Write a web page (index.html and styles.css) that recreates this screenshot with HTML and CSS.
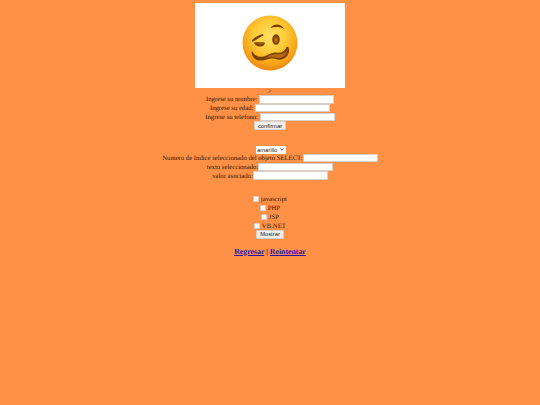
FILE: index.html
```html
<!DOCTYPE html>
<html lang="es">
<head>
<meta charset="utf-8">
<title>Formulario</title>
<link rel="stylesheet" href="styles.css">
</head>
<body>
<main class="page">
  <div class="picture">
    <svg class="emoji" viewBox="0 0 112 112" role="img" aria-label="woozy face">
      <defs>
        <radialGradient id="skin" cx="50%" cy="38%" r="60%">
          <stop offset="0" stop-color="#ffe066"/>
          <stop offset="0.5" stop-color="#fdc935"/>
          <stop offset="0.82" stop-color="#f9a51a"/>
          <stop offset="1" stop-color="#ef8c12"/>
        </radialGradient>
        <filter id="soft"><feGaussianBlur stdDeviation="0.6"/></filter>
      </defs>
      <circle cx="56" cy="56" r="55" fill="url(#skin)" filter="url(#soft)"/>
      <g filter="url(#soft)" fill="#7a4006">
        <path d="M57 26 C61 18 76 15 85 28 C76 23 66 23 57 26Z"/>
        <path d="M20 50 C26 44 34 40 42 38 L43 41 C36 44 30 49 22 53 C20 53 19 52 20 50Z"/>
        <path d="M24 55 C31 54 39 54 46 55 C46 60 41 64 34 63 C29 62 25 59 24 55Z"/>
        <ellipse cx="68" cy="49" rx="7.5" ry="10.5"/>
        <path d="M22 74 C25 82 33 85 43 83 C52 81 59 74 68 75 C76 76 84 76 89 64 C92 62 95 67 94 74 C91 85 81 91 71 89 C64 87 58 86 50 89 C41 92 31 92 26 88 C21 84 19 78 19 75 C19 73 21 72 22 74Z"/>
      </g>
      <g filter="url(#soft)" fill="#b9690c">
        <path d="M29 56 C33 55 38 55 43 56 C40 59 33 59 29 56Z"/>
        <ellipse cx="68" cy="50" rx="3.5" ry="6"/>
        <path d="M42 87 C52 84 60 77 68 78 C77 80 85 78 91 70 C90 79 82 87 72 86 C62 84 54 83 42 87Z"/>
      </g>
    </svg>
  </div>
  <div class="row mark">&gt;</div>
  <form>
    <div class="row spaced"><label for="nombre">Ingrese su nombre:</label><input class="field" id="nombre" type="text"></div>
    <div class="row spaced"><label for="edad">Ingrese su edad:</label><input class="field" id="edad" type="text"></div>
    <div class="row spaced"><label for="telefono">Ingrese su telefono:</label><input class="field" id="telefono" type="text"></div>
    <div class="row"><input class="btn" type="button" value="confirmar"></div>
  </form>
  <form class="section">
    <div class="row"><select class="choice"><option>amarillo</option></select></div>
    <div class="row"><label for="indice">Numero de Indice seleccionado del objeto SELECT:</label><input class="field" id="indice" type="text"></div>
    <div class="row"><label for="texto">texto seleccionado:</label><input class="field" id="texto" type="text"></div>
    <div class="row"><label for="valor">valor asociado:</label><input class="field" id="valor" type="text"></div>
  </form>
  <form class="section">
    <div class="row spaced"><input class="check" id="js" type="checkbox"><label for="js">javascript</label></div>
    <div class="row spaced"><input class="check" id="php" type="checkbox"><label for="php">PHP</label></div>
    <div class="row spaced"><input class="check" id="jsp" type="checkbox"><label for="jsp">JSP</label></div>
    <div class="row spaced"><input class="check" id="vb" type="checkbox"><label for="vb">VB.NET</label></div>
    <div class="row"><input class="btn" type="button" value="Mostrar"></div>
  </form>
  <p class="links"><a href="#">Regresar</a> | <a href="#">Reintentar</a></p>
</main>
</body>
</html>
```
FILE: styles.css
```css
html {
  background: #ff9147;
}
body {
  margin: 3px 4px 4px;
  font-family: "Liberation Serif", "Times New Roman", serif;
  font-size: 6.7px;
  text-rendering: geometricPrecision;
  color: #2e1606;
}
.page {
  text-align: center;
}
.picture {
  display: flex;
  align-items: center;
  justify-content: center;
  width: 150px;
  height: 85px;
  margin: 0 auto;
  background: #fff;
}
.emoji {
  display: block;
  width: 56px;
  height: 56px;
  margin-bottom: 6px;
}
.row {
  display: flex;
  align-items: center;
  justify-content: center;
  height: 8.75px;
  white-space: nowrap;
}
.row label {
  padding-top: 1px;
}
.spaced {
  gap: 1.7px;
}
.mark {
  height: 7px;
}
.field {
  box-sizing: border-box;
  width: 75px;
  height: 8.5px;
  margin: 0;
  padding: 0;
  background: #fff;
  border: 1px solid #d8cfc8;
}
.btn {
  box-sizing: border-box;
  height: 8.5px;
  margin: 0;
  padding: 0 3px;
  font: 5.8px "Liberation Sans", Arial, sans-serif;
  color: #222;
  background: #f0efee;
  border: 1px solid #d8cfc8;
  border-radius: 1px;
}
.choice {
  appearance: none;
  box-sizing: border-box;
  width: 30px;
  height: 8px;
  margin: 1px 0 0 1px;
  padding: 0 0 0 1.5px;
  font: 5.8px "Liberation Sans", Arial, sans-serif;
  color: #222;
  background: #fff url("data:image/svg+xml,%3Csvg xmlns='http://www.w3.org/2000/svg' viewBox='0 0 6 4'%3E%3Cpath d='M.5.5 3 3 5.500.5' fill='none' stroke='%23222' stroke-width='1.200'/%3E%3C/svg%3E") no-repeat right 1.5px center / 4px 3px;
  border: none;
  border-radius: 1px;
}
.check {
  appearance: none;
  box-sizing: border-box;
  width: 6px;
  height: 6px;
  margin: 0;
  background: #fff;
  border: 0.5px solid #d8cfc8;
  border-radius: 1px;
}
.section {
  margin-top: 15px;
}
.links {
  margin: 8px 0;
  font-size: 7.8px;
  font-weight: bold;
}
.links a {
  color: #2a10b0;
}
```
